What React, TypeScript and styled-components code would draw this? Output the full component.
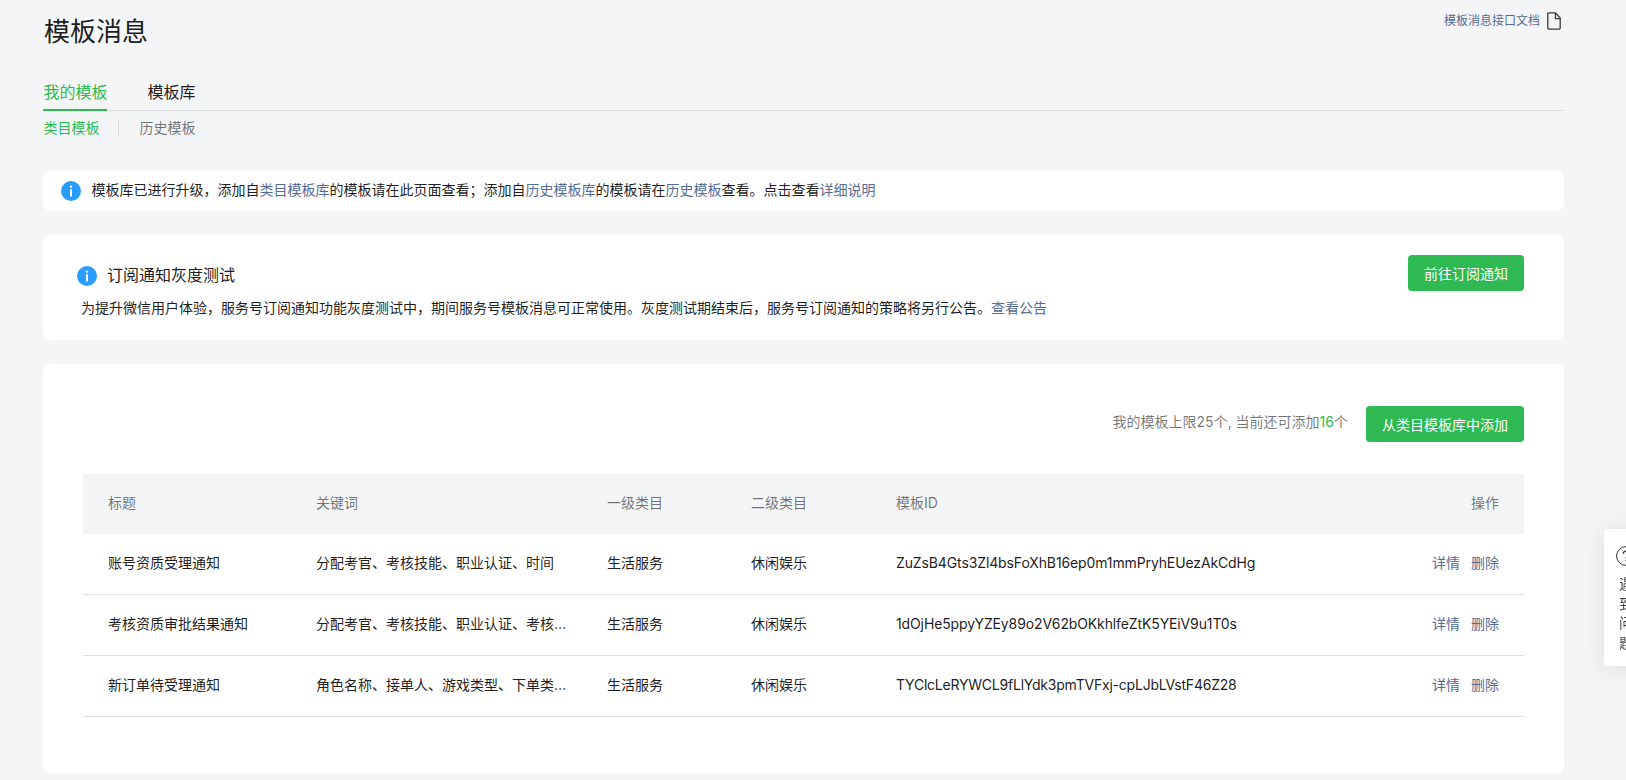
import React from "react";
import styled, { createGlobalStyle } from "styled-components";

const GREEN = "#2fb952";
const LINK = "#576b95";
const TEXT = "rgba(0,0,0,0.9)";
const MUTED = "rgba(0,0,0,0.55)";

const Global = createGlobalStyle`
  html, body { margin: 0; padding: 0; height: 780px; overflow: hidden; background: #f4f5f7; }
  body { font-family: Inter, "Noto Sans CJK SC", sans-serif; font-size: 14px; color: ${TEXT}; }
  * { box-sizing: border-box; }
`;

const Page = styled.div`
  width: 1521px;
  margin-left: 43px;
`;
const Header = styled.header`
  height: 81px;
  display: flex;
  justify-content: space-between;
  align-items: flex-start;
`;
const Title = styled.h1`
  margin: 14px 0 0 1px;
  font-size: 26px;
  line-height: 36px;
  font-weight: 400;
`;
const DocLink = styled.a`
  display: flex;
  align-items: center;
  gap: 7px;
  margin: 12px 3px 0 0;
  font-size: 12px;
  line-height: 18px;
  color: ${LINK};
`;
const TabBar = styled.nav`
  display: flex;
  gap: 40px;
  height: 30px;
  border-bottom: 1px solid #dcdddf;
`;
const Tab = styled.a<{ $active?: boolean }>`
  width: ${(p) => (p.$active ? "64px" : "auto")};
  height: 30px;
  font-size: 16px;
  line-height: 22px;
  white-space: nowrap;
  text-indent: 0.5px;
  color: ${(p) => (p.$active ? GREEN : TEXT)};
  border-bottom: ${(p) => (p.$active ? `2px solid ${GREEN}` : "none")};
`;
const SubTabs = styled.div`
  display: flex;
  align-items: center;
  height: 20px;
  margin-top: 7px;
  padding-left: 0.5px;
`;
const SubTab = styled.a<{ $active?: boolean }>`
  font-size: 14px;
  line-height: 20px;
  color: ${(p) => (p.$active ? GREEN : MUTED)};
`;
const SubSep = styled.span`
  width: 1px;
  height: 14px;
  margin: 0 21px 0 18px;
  background: #d9dadc;
`;
const Notice = styled.div`
  display: flex;
  align-items: center;
  gap: 10.5px;
  height: 40px;
  margin-top: 33px;
  padding-left: 18px;
  background: #fff;
  border-radius: 8px;
  line-height: 20px;
`;
const NoticeText = styled.span`
  padding-bottom: 2px;
`;
const Link = styled.a`
  color: ${LINK};
`;
const SubscribeCard = styled.section`
  display: flex;
  justify-content: space-between;
  align-items: flex-start;
  height: 105px;
  margin-top: 24px;
  padding: 0 40px 0 38px;
  background: #fff;
  border-radius: 8px;
`;
const SubscribeBody = styled.div`
  padding-top: 31px;
`;
const SubscribeTitle = styled.div`
  display: flex;
  align-items: center;
  gap: 10px;
  margin-left: -4px;
  font-size: 16px;
  line-height: 20px;
`;
const SubscribeTitleText = styled.span`
  margin-top: -3px;
`;
const SubscribeDesc = styled.p`
  margin: 11px 0 0;
  line-height: 22px;
`;
const Button = styled.a<{ $top?: number }>`
  display: flex;
  align-items: center;
  justify-content: center;
  height: 36px;
  padding: 0 16px;
  margin-top: ${(p) => p.$top ?? 0}px;
  background: ${GREEN};
  border-radius: 4px;
  color: #fff;
  font-size: 14px;
`;
const ListCard = styled.section`
  height: 409px;
  margin-top: 24px;
  padding: 42px 40px 0;
  background: #fff;
  border-radius: 8px;
`;
const Toolbar = styled.div`
  display: flex;
  justify-content: flex-end;
  gap: 18px;
  height: 36px;
  margin-bottom: 32px;
`;
const Quota = styled.span`
  line-height: 31px;
  color: ${MUTED};
`;
const Green = styled.span`
  color: ${GREEN};
`;
const Table = styled.table`
  width: 100%;
  table-layout: fixed;
  border-collapse: separate;
  border-spacing: 0;
`;
const Th = styled.th<{ $right?: boolean }>`
  height: 60px;
  padding: 0 25px 4px 25px;
  background: #f4f5f7;
  color: ${MUTED};
  font-weight: 400;
  text-align: ${(p) => (p.$right ? "right" : "left")};
`;
const Td = styled.td<{ $right?: boolean; $clip?: boolean }>`
  height: 61px;
  padding: ${(p) => (p.$clip ? "0 14px 4px 25px" : "0 25px 4px 25px")};
  border-bottom: 1px solid #dcdddf;
  text-align: ${(p) => (p.$right ? "right" : "left")};
  white-space: nowrap;
  overflow: hidden;
  text-overflow: ${(p) => (p.$clip ? "ellipsis" : "clip")};
`;
const TemplateId = styled.span<{ $tracking: number }>`
  letter-spacing: ${(p) => p.$tracking}px;
`;
const Action = styled.a`
  margin-left: 11px;
  color: ${LINK};
`;
const HelpPanel = styled.aside`
  position: fixed;
  top: 529px;
  left: 1604px;
  width: 60px;
  height: 137px;
  padding: 17px 0 0 12px;
  background: #fff;
  border-radius: 4px;
  box-shadow: 0 2px 24px rgba(0, 0, 0, 0.1);
`;
const HelpText = styled.div`
  width: 14px;
  margin: 8px 0 0 3px;
  font-size: 14px;
  line-height: 19.5px;
  color: rgba(0, 0, 0, 0.75);
  word-break: break-all;
`;
const IconSvg = styled.svg`
  display: block;
  flex: none;
`;

const InfoIcon = () => (
  <IconSvg width="20" height="20" viewBox="0 0 20 20">
    <circle cx="10" cy="10" r="10" fill="#2a9dff" />
    <circle cx="10" cy="5.6" r="1.2" fill="#fff" />
    <rect x="9" y="8" width="2" height="7.6" rx="0.4" fill="#fff" />
  </IconSvg>
);
const DocIcon = () => (
  <IconSvg width="14" height="18" viewBox="0 0 14 18" fill="none" stroke="#3a3a3a" strokeWidth="1.3">
    <path d="M1.6.8H8.4L13.2 6V16A1.2 1.2 0 0 1 12 17.2H2A1.2 1.2 0 0 1 .8 16V1.6A.8.8 0 0 1 1.6.8Z" />
    <path d="M8.4.8V6.6H13.2" />
  </IconSvg>
);
const QuestionIcon = () => (
  <IconSvg width="20" height="20" viewBox="0 0 20 20" fill="none" stroke="#333" strokeWidth="1">
    <circle cx="10" cy="10" r="9.4" />
    <path d="M7.2 7.8A2.8 2.8 0 1 1 11.3 10.3C10.4 10.8 10 11.3 10 12.4" strokeWidth="1.2" />
    <circle cx="10" cy="14.6" r="0.8" fill="#333" stroke="none" />
  </IconSvg>
);

const rows = [
  { title: "账号资质受理通知", keywords: "分配考官、考核技能、职业认证、时间", id: "ZuZsB4Gts3Zl4bsFoXhB16ep0m1mmPryhEUezAkCdHg", tracking: -0.12 },
  { title: "考核资质审批结果通知", keywords: "分配考官、考核技能、职业认证、考核结果、时间", id: "1dOjHe5ppyYZEy89o2V62bOKkhlfeZtK5YEiV9u1T0s", tracking: -0.12 },
  { title: "新订单待受理通知", keywords: "角色名称、接单人、游戏类型、下单类型、时间", id: "TYClcLeRYWCL9fLlYdk3pmTVFxj-cpLJbLVstF46Z28", tracking: -0.22 },
];

export default function App() {
  return (
    <>
      <Global />
      <Page>
        <Header>
          <Title>模板消息</Title>
          <DocLink>
            模板消息接口文档
            <DocIcon />
          </DocLink>
        </Header>
        <TabBar>
          <Tab $active>我的模板</Tab>
          <Tab>模板库</Tab>
        </TabBar>
        <SubTabs>
          <SubTab $active>类目模板</SubTab>
          <SubSep />
          <SubTab>历史模板</SubTab>
        </SubTabs>
        <Notice>
          <InfoIcon />
          <NoticeText>
            模板库已进行升级，添加自<Link>类目模板库</Link>的模板请在此页面查看；添加自<Link>历史模板库</Link>的模板请在<Link>历史模板</Link>查看。点击查看<Link>详细说明</Link>
          </NoticeText>
        </Notice>
        <SubscribeCard>
          <SubscribeBody>
            <SubscribeTitle>
              <InfoIcon />
              <SubscribeTitleText>订阅通知灰度测试</SubscribeTitleText>
            </SubscribeTitle>
            <SubscribeDesc>
              为提升微信用户体验，服务号订阅通知功能灰度测试中，期间服务号模板消息可正常使用。灰度测试期结束后，服务号订阅通知的策略将另行公告。<Link>查看公告</Link>
            </SubscribeDesc>
          </SubscribeBody>
          <Button $top={20}>前往订阅通知</Button>
        </SubscribeCard>
        <ListCard>
          <Toolbar>
            <Quota>
              我的模板上限25个, 当前还可添加<Green>16</Green>个
            </Quota>
            <Button>从类目模板库中添加</Button>
          </Toolbar>
          <Table>
            <colgroup>
              <col style={{ width: 208 }} />
              <col style={{ width: 291 }} />
              <col style={{ width: 144 }} />
              <col style={{ width: 145 }} />
              <col style={{ width: 450 }} />
              <col />
            </colgroup>
            <thead>
              <tr>
                <Th>标题</Th>
                <Th>关键词</Th>
                <Th>一级类目</Th>
                <Th>二级类目</Th>
                <Th>模板ID</Th>
                <Th $right>操作</Th>
              </tr>
            </thead>
            <tbody>
              {rows.map((r) => (
                <tr key={r.id}>
                  <Td>{r.title}</Td>
                  <Td $clip>{r.keywords}</Td>
                  <Td>生活服务</Td>
                  <Td>休闲娱乐</Td>
                  <Td>
                    <TemplateId $tracking={r.tracking}>{r.id}</TemplateId>
                  </Td>
                  <Td $right>
                    <Action>详情</Action>
                    <Action>删除</Action>
                  </Td>
                </tr>
              ))}
            </tbody>
          </Table>
        </ListCard>
      </Page>
      <HelpPanel>
        <QuestionIcon />
        <HelpText>遇到问题</HelpText>
      </HelpPanel>
    </>
  );
}
